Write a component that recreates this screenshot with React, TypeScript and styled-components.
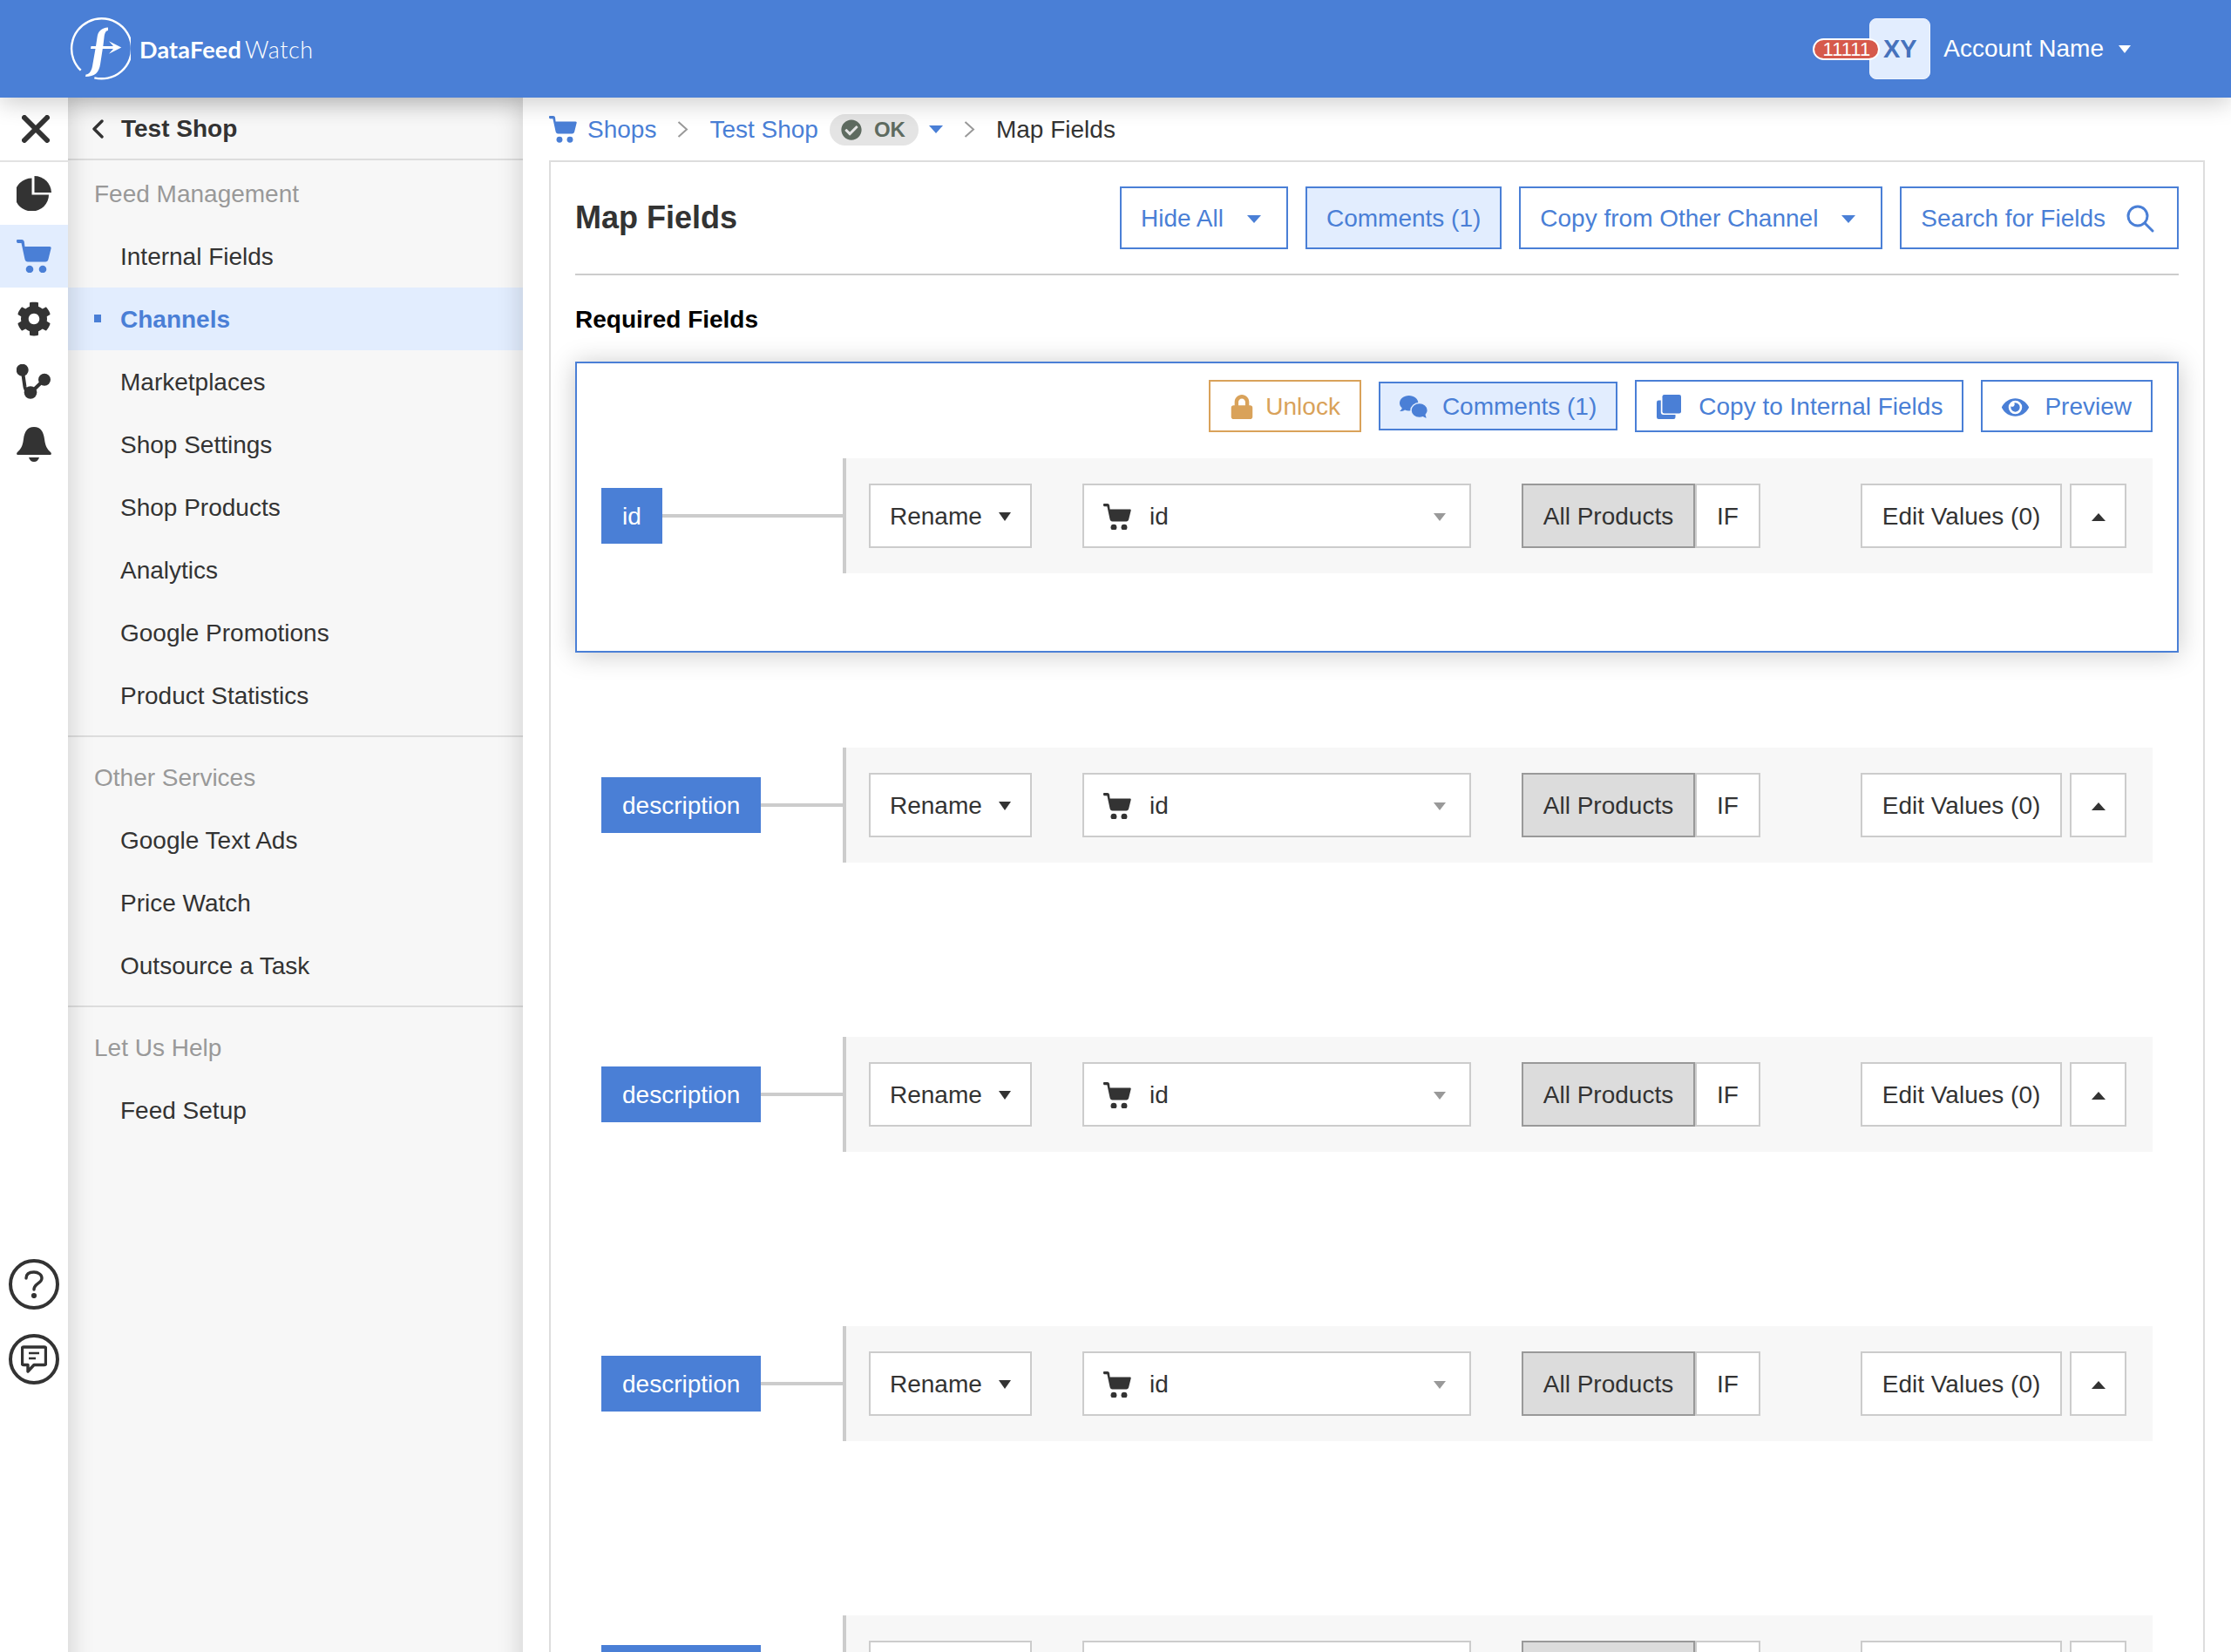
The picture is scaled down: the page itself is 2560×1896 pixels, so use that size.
import { createGlobalStyle } from "styled-components";
import styled from "styled-components";
import { FaCheckCircle, FaCog, FaEye, FaLock } from "react-icons/fa";

const Global = createGlobalStyle`
  html, body { margin: 0; padding: 0; height: 100%; overflow: hidden; background: #fff; }
  * { box-sizing: border-box; }
  body { font-family: "Liberation Sans", Arial, sans-serif; font-size: 28px; color: #333; }
`;

const BLUE = "#4a7fd6";
const TINT = "#e2edfe";

const Shell = styled.div`
  display: flex;
  flex-direction: column;
  height: 1896px;
  overflow: hidden;
`;

const Header = styled.header`
  position: relative;
  z-index: 3;
  flex: 0 0 112px;
  display: flex;
  align-items: center;
  padding: 0 115px 0 80px;
  background: ${BLUE};
  color: #fff;
  box-shadow: 0 6px 26px rgba(0, 0, 0, 0.2);
`;

const Brand = styled.div`
  display: flex;
  align-items: center;
  gap: 10px;
`;

const Wordmark = styled.span`
  font-family: Lato, sans-serif;
  font-size: 27px;
  font-weight: 700;
  letter-spacing: 0.2px;
  span { font-weight: 300; margin-left: 4px; letter-spacing: 0.6px; }
`;

const Account = styled.div`
  margin-left: auto;
  display: flex;
  align-items: center;
`;

const Avatar = styled.div`
  position: relative;
  width: 70px;
  height: 70px;
  display: flex;
  align-items: center;
  justify-content: center;
  background: ${TINT};
  border: 1px solid #f0f5ff;
  border-radius: 8px;
  color: #4672bc;
  font-size: 29px;
  font-weight: 700;
  margin-right: 15px;
`;

const Badge = styled.span`
  position: absolute;
  right: 57px;
  top: 22px;
  width: 77px;
  height: 25px;
  display: flex;
  align-items: center;
  justify-content: center;
  background: #d6594b;
  border: 2px solid #fff;
  border-radius: 13px;
  color: #fff;
  font-size: 22px;
  font-weight: 400;
`;

const Caret = styled.span<{ $color?: string; $w?: number; $h?: number; $up?: boolean; $trail?: number }>`
  display: inline-block;
  flex: none;
  width: 0;
  height: 0;
  margin-right: ${(p) => p.$trail ?? 0}px;
  border-left: ${(p) => (p.$w ?? 14) / 2}px solid transparent;
  border-right: ${(p) => (p.$w ?? 14) / 2}px solid transparent;
  ${(p) => (p.$up ? "border-bottom" : "border-top")}: ${(p) => p.$h ?? 9}px solid ${(p) => p.$color ?? "currentColor"};
`;

const AccountCaret = styled(Caret)`
  margin-left: 17px;
`;

const Body = styled.div`
  flex: 1;
  display: flex;
  min-height: 0;
`;

const Rail = styled.nav`
  flex: 0 0 78px;
  display: flex;
  flex-direction: column;
  background: #fff;
  padding-bottom: 307px;
`;

const RailClose = styled.div`
  height: 74px;
  display: flex;
  align-items: center;
  justify-content: center;
  padding-left: 3px;
  border-bottom: 2px solid #e2e2e2;
`;

const RailItem = styled.div<{ $active?: boolean }>`
  height: 72px;
  display: flex;
  align-items: center;
  justify-content: center;
  color: ${(p) => (p.$active ? BLUE : "#333")};
  background: ${(p) => (p.$active ? TINT : "transparent")};
`;

const RailFoot = styled.div`
  margin-top: auto;
  display: flex;
  flex-direction: column;
  align-items: center;
  gap: 28px;
`;

const RoundIcon = styled.div`
  width: 58px;
  height: 58px;
  display: flex;
  align-items: center;
  justify-content: center;
  border: 4px solid #333;
  border-radius: 50%;
`;

const Sidebar = styled.aside`
  position: relative;
  flex: 0 0 522px;
  background: #f7f7f7;
  &::after {
    content: "";
    position: absolute;
    inset: 0 0 -60px 0;
    pointer-events: none;
    box-shadow: inset 0 0 30px rgba(0, 0, 0, 0.18);
  }
`;

const SideHead = styled.div`
  height: 72px;
  display: flex;
  align-items: center;
  padding: 2px 0 0 28px;
  gap: 20px;
  font-weight: 700;
  border-bottom: 2px solid #ddd;
`;

const SideGroup = styled.div<{ $first?: boolean; $last?: boolean }>`
  padding: ${(p) => (p.$first ? 2 : 10)}px 0 10px;
  border-bottom: ${(p) => (p.$last ? "none" : "2px solid #ddd")};
`;

const SideLabel = styled.div`
  height: 72px;
  line-height: 73px;
  padding-left: 30px;
  color: #999;
`;

const SideItem = styled.div<{ $active?: boolean }>`
  position: relative;
  height: 72px;
  line-height: 74px;
  padding-left: 60px;
  font-weight: ${(p) => (p.$active ? 700 : 400)};
  color: ${(p) => (p.$active ? BLUE : "#333")};
  background: ${(p) => (p.$active ? TINT : "transparent")};
  &::before {
    content: "";
    display: ${(p) => (p.$active ? "block" : "none")};
    position: absolute;
    left: 30px;
    top: 31px;
    width: 8px;
    height: 9px;
    background: ${BLUE};
  }
`;

const Main = styled.main`
  flex: 1;
  display: flex;
  flex-direction: column;
  min-width: 0;
  padding: 0 30px;
`;

const Crumbs = styled.div`
  flex: 0 0 72px;
  display: flex;
  align-items: center;
  padding-top: 1px;
`;

const CrumbHome = styled.span`
  display: flex;
  align-items: center;
  gap: 12px;
`;

const Crumb = styled.span<{ $link?: boolean }>`
  color: ${(p) => (p.$link ? BLUE : "#333")};
`;

const CrumbArrow = styled.svg`
  flex: none;
  margin: 0 24px;
`;

const StatusPill = styled.span`
  display: flex;
  align-items: center;
  gap: 14px;
  height: 36px;
  margin: 0 12px 0 13px;
  padding: 0 15px 0 13px;
  border-radius: 18px;
  background: #e4e4e4;
  color: #5e6b60;
  font-size: 24px;
  font-weight: 700;
`;

const Panel = styled.section`
  flex: 1;
  min-height: 0;
  padding: 0 28px;
  border: 2px solid #ddd;
  border-bottom: none;
`;

const TopBar = styled.div`
  display: flex;
  align-items: center;
  justify-content: space-between;
  padding: 28px 0;
  border-bottom: 2px solid #ccc;
`;

const Title = styled.h1`
  margin: 0;
  font-size: 36px;
  line-height: 72px;
  font-weight: 700;
  color: #333;
`;

const TopActions = styled.div`
  display: flex;
  gap: 20px;
`;

const OutlineButton = styled.button<{ $active?: boolean; $gap?: number }>`
  display: flex;
  align-items: center;
  gap: ${(p) => p.$gap ?? 27}px;
  height: 72px;
  padding: 2px 22px 0;
  font: inherit;
  white-space: nowrap;
  color: ${BLUE};
  background: ${(p) => (p.$active ? TINT : "#fff")};
  border: 2px solid ${BLUE};
`;

const Subtitle = styled.h2`
  margin: 34px 0 31px;
  font-size: 28px;
  line-height: 34px;
  font-weight: 700;
  color: #000;
`;

const FieldCard = styled.div<{ $selected?: boolean }>`
  position: relative;
  z-index: ${(p) => (p.$selected ? 1 : 0)};
  height: ${(p) => (p.$selected ? 334 : 332)}px;
  margin-bottom: ${(p) => (p.$selected ? -2 : 0)}px;
  padding: 19px 28px 0 28px;
  border: 2px solid ${(p) => (p.$selected ? BLUE : "transparent")};
  background: #fff;
  box-shadow: ${(p) => (p.$selected ? "0 2px 28px rgba(0, 0, 0, 0.22)" : "none")};
`;

const CardActions = styled.div`
  height: 60px;
  margin-bottom: 30px;
  display: flex;
  align-items: center;
  justify-content: flex-end;
  gap: 20px;
`;

const CardButton = styled(OutlineButton)<{ $tone?: string }>`
  height: ${(p) => (p.$active ? 56 : 60)}px;
  color: ${(p) => p.$tone ?? BLUE};
  border-color: ${(p) => p.$tone ?? BLUE};
`;

const FieldRow = styled.div`
  display: flex;
  align-items: center;
`;

const FieldTag = styled.span`
  flex: none;
  height: 64px;
  line-height: 66px;
  padding: 0 24px;
  background: ${BLUE};
  color: #fff;
`;

const Connector = styled.span`
  flex: 1;
  height: 4px;
  background: #ccc;
`;

const Mapping = styled.div`
  flex: 0 0 1503px;
  height: 132px;
  display: flex;
  align-items: center;
  padding: 0 30px 0 26px;
  background: #f7f7f7;
  border-left: 4px solid #ccc;
`;

const Control = styled.button<{ $w?: number; $on?: boolean; $center?: boolean }>`
  flex: none;
  display: flex;
  align-items: center;
  justify-content: ${(p) => (p.$center ? "center" : "space-between")};
  width: ${(p) => (p.$w ? `${p.$w}px` : "auto")};
  height: 74px;
  padding: 2px 22px 0;
  font: inherit;
  white-space: nowrap;
  color: #333;
  background: ${(p) => (p.$on ? "#dcdcdc" : "#fff")};
  border: 2px solid ${(p) => (p.$on ? "#999" : "#ccc")};
`;

const Source = styled.span`
  display: flex;
  align-items: center;
  gap: 21px;
`;

const Spaced = styled.div<{ $left: number }>`
  margin-left: ${(p) => p.$left}px;
  display: flex;
`;

const RightGroup = styled.div`
  margin-left: auto;
  display: flex;
  gap: 9px;
`;

const SearchGlyph = styled.svg`
  flex: none;
  margin-right: 4px;
`;

const CartIcon = ({ size = 40, color = "currentColor" }: { size?: number; color?: string }) => (
  <svg width={size} height={size * 0.96} viewBox="0 0 40 38.4" fill={color}>
    <path d="M0 1.5 C0 .5 .5 0 1.5 0 H6 C7.5 0 8.5 1 8.8 2.5 L9.5 8 H38 C39.3 8 40 9 39.6 10 L36.5 22.5 C36 24.4 35 25.5 33 25.5 H13 C11 25.5 10 24.4 9.5 22.5 L5.5 4 H1.5 C.5 4 0 3 0 1.5 Z" />
    <circle cx="15" cy="34" r="4.3" />
    <circle cx="30" cy="34" r="4.3" />
  </svg>
);

const Chevron = () => (
  <CrumbArrow width="13" height="19" viewBox="0 0 13 19" fill="none" stroke="#999" strokeWidth="2">
    <path d="M1.5 1 L11 9.5 L1.5 18" />
  </CrumbArrow>
);

const Logo = () => (
  <svg width="70" height="72" viewBox="0 0 70 72" fill="#fff">
    <path d="M12.7 60.7 A34.5 34.5 0 1 1 28.3 69.3" fill="none" stroke="#fff" strokeWidth="2.4" />
    <path d="M44 11.5 L44 15 C41 15 40 19 39.5 23 L38.3 33 H50 L45 27.3 L59.3 34.5 L45 41.7 L50 36 H37.8 L35 54 C33.5 63 29 68 18 68 L18.5 65.5 C23 65 25.5 61 26.5 53 L29.5 36 H24 L24.5 33 H30 L31.5 23 C32.5 15.5 36.5 12 44 11.5 Z" />
  </svg>
);

const PieIcon = () => (
  <svg width="40" height="40" viewBox="0 0 40 40" fill="#333">
    <path d="M20.5 0 A19.5 19.5 0 0 1 40 19 H20.5 Z" />
    <path d="M17.5 2.5 V21.5 H37 A19.5 19 0 1 1 17.5 2.5 Z" />
  </svg>
);

const BranchIcon = () => (
  <svg width="40" height="40" viewBox="0 0 40 40">
    <path d="M6.7 6.7 L9.5 26 Q11 34 18 31 L31.7 17.7" fill="none" stroke="#333" strokeWidth="4" />
    <circle cx="6.7" cy="6.7" r="7" fill="#333" />
    <circle cx="32" cy="17.7" r="7" fill="#333" />
    <circle cx="16" cy="32.5" r="7.3" fill="#333" />
  </svg>
);

const BellIcon = () => (
  <svg width="40" height="40" viewBox="0 0 40 40" fill="#333">
    <path d="M20 0 C28 0 31 6 32 14 C33 22 35 25 39 29 C40.5 30.5 40 32 38 32 H2 C0 32 -.5 30.5 1 29 C5 25 7 22 8 14 C9 6 12 0 20 0 Z" />
    <path d="M14 35 H26 C25 38 23 40 20 40 C17 40 15 38 14 35 Z" />
  </svg>
);

const BubblesIcon = () => (
  <svg width="33" height="27" viewBox="0 0 33 27" fill={BLUE}>
    <path d="M10.7 0 C16.6 0 21.4 3.9 21.4 8.7 C21.4 13.5 16.6 17.4 10.7 17.4 C9 17.4 7.5 17.1 6 16.5 C4.5 17.5 2.5 18 0 18 C1.5 16.8 2.4 15.6 2.8 14.2 C1 12.6 0 10.8 0 8.7 C0 3.9 4.8 0 10.7 0 Z" />
    <path d="M22.7 8.5 C28 8.5 32.4 12.3 32.4 17 C32.4 18.9 31.6 20.7 30.3 22.1 C30.6 23.8 31.4 25.4 32.6 26.6 C30.3 26.6 28.4 26 26.8 24.8 C25.5 25.3 24.1 25.5 22.7 25.5 C17.4 25.5 13 21.7 13 17 C13 12.3 17.4 8.5 22.7 8.5 Z" stroke={TINT} strokeWidth="1.5" />
  </svg>
);

const StackIcon = () => (
  <svg width="30" height="28" viewBox="0 0 30 28" fill={BLUE}>
    <rect x="1" y="6.5" width="21.5" height="21.5" rx="2.2" />
    <rect x="5.8" y="-1" width="24" height="24" rx="3" fill="#fff" />
    <rect x="7.5" y="0" width="21.5" height="21.5" rx="2.2" />
  </svg>
);

const FieldLine = ({ name, selected }: { name: string; selected?: boolean }) => (
  <FieldCard $selected={selected}>
    <CardActions>
      {selected && (
        <>
          <CardButton $tone="#d9a25a" $gap={13}>
            <FaLock size={28} />
            Unlock
          </CardButton>
          <CardButton $active $gap={16}>
            <BubblesIcon />
            Comments (1)
          </CardButton>
          <CardButton $gap={19}>
            <StackIcon />
            Copy to Internal Fields
          </CardButton>
          <CardButton $gap={18}>
            <FaEye size={31} />
            Preview
          </CardButton>
        </>
      )}
    </CardActions>
    <FieldRow>
      <FieldTag>{name}</FieldTag>
      <Connector />
      <Mapping>
        <Control $w={187}>
          Rename
          <Caret $w={14} $h={10} />
        </Control>
        <Spaced $left={58}>
          <Control $w={446}>
            <Source>
              <CartIcon size={32} color="#333" />
              id
            </Source>
            <Caret $w={14} $h={9} $color="#999" $trail={5} />
          </Control>
        </Spaced>
        <Spaced $left={58}>
          <Control $w={199} $on $center>All Products</Control>
          <Control $w={75} $center>IF</Control>
        </Spaced>
        <RightGroup>
          <Control $w={231} $center>Edit Values (0)</Control>
          <Control $w={65} $center>
            <Caret $w={16} $h={9} $up />
          </Control>
        </RightGroup>
      </Mapping>
    </FieldRow>
  </FieldCard>
);

export default function App() {
  return (
    <Shell>
      <Global />
      <Header>
        <Brand>
          <Logo />
          <Wordmark>
            DataFeed<span>Watch</span>
          </Wordmark>
        </Brand>
        <Account>
          <Avatar>
            <Badge>11111</Badge>
            XY
          </Avatar>
          Account Name
          <AccountCaret />
        </Account>
      </Header>
      <Body>
        <Rail>
          <RailClose>
            <svg width="32" height="32" viewBox="0 0 32 32" fill="none" stroke="#333" strokeWidth="6" strokeLinecap="round">
              <path d="M3 3 L29 29 M29 3 L3 29" />
            </svg>
          </RailClose>
          <RailItem><PieIcon /></RailItem>
          <RailItem $active><CartIcon /></RailItem>
          <RailItem><FaCog size={40} /></RailItem>
          <RailItem><BranchIcon /></RailItem>
          <RailItem><BellIcon /></RailItem>
          <RailFoot>
            <RoundIcon>
              <svg width="22" height="32" viewBox="0 0 22 32" fill="none" stroke="#333" strokeWidth="3.4" strokeLinecap="round">
                <path d="M2 9 C2 4 6 2 11 2 C16 2 20 5 20 9 C20 15 11 15 11 22" />
                <circle cx="11" cy="29" r="1.4" fill="#333" />
              </svg>
            </RoundIcon>
            <RoundIcon>
              <svg width="30" height="32" viewBox="0 0 30 32" fill="none" stroke="#333" strokeWidth="3.4" strokeLinejoin="round">
                <path d="M3 2 H27 C28 2 28.5 2.5 28.5 3.5 V21 C28.5 22 28 22.5 27 22.5 H15 L8 30 V22.5 H3 C2 22.5 1.5 22 1.5 21 V3.5 C1.5 2.5 2 2 3 2 Z" />
                <path d="M9 9 H21 M9 15 H17" strokeWidth="2.6" />
              </svg>
            </RoundIcon>
          </RailFoot>
        </Rail>
        <Sidebar>
          <SideHead>
            <svg width="13" height="22" viewBox="0 0 13 22" fill="none" stroke="#333" strokeWidth="3.4" strokeLinecap="round" strokeLinejoin="round">
              <path d="M11 2 L2 11 L11 20" />
            </svg>
            Test Shop
          </SideHead>
          <SideGroup $first>
            <SideLabel>Feed Management</SideLabel>
            <SideItem>Internal Fields</SideItem>
            <SideItem $active>Channels</SideItem>
            <SideItem>Marketplaces</SideItem>
            <SideItem>Shop Settings</SideItem>
            <SideItem>Shop Products</SideItem>
            <SideItem>Analytics</SideItem>
            <SideItem>Google Promotions</SideItem>
            <SideItem>Product Statistics</SideItem>
          </SideGroup>
          <SideGroup>
            <SideLabel>Other Services</SideLabel>
            <SideItem>Google Text Ads</SideItem>
            <SideItem>Price Watch</SideItem>
            <SideItem>Outsource a Task</SideItem>
          </SideGroup>
          <SideGroup $last>
            <SideLabel>Let Us Help</SideLabel>
            <SideItem>Feed Setup</SideItem>
          </SideGroup>
        </Sidebar>
        <Main>
          <Crumbs>
            <CrumbHome>
              <CartIcon size={32} color={BLUE} />
              <Crumb $link>Shops</Crumb>
            </CrumbHome>
            <Chevron />
            <Crumb $link>Test Shop</Crumb>
            <StatusPill>
              <FaCheckCircle size={24} />
              OK
            </StatusPill>
            <Caret $w={17} $h={9} $color={BLUE} />
            <Chevron />
            <Crumb>Map Fields</Crumb>
          </Crumbs>
          <Panel>
            <TopBar>
              <Title>Map Fields</Title>
              <TopActions>
                <OutlineButton>
                  Hide All
                  <Caret $w={16} $h={9} $trail={7} />
                </OutlineButton>
                <OutlineButton $active>Comments (1)</OutlineButton>
                <OutlineButton>
                  Copy from Other Channel
                  <Caret $w={16} $h={9} $trail={7} />
                </OutlineButton>
                <OutlineButton $gap={24}>
                  Search for Fields
                  <SearchGlyph width="32" height="32" viewBox="0 0 32 32" fill="none" stroke={BLUE} strokeWidth="3" strokeLinecap="round">
                    <circle cx="13" cy="13" r="11" />
                    <path d="M21 21 L30 30" />
                  </SearchGlyph>
                </OutlineButton>
              </TopActions>
            </TopBar>
            <Subtitle>Required Fields</Subtitle>
            <FieldLine name="id" selected />
            <FieldLine name="description" />
            <FieldLine name="description" />
            <FieldLine name="description" />
            <FieldLine name="description" />
          </Panel>
        </Main>
      </Body>
    </Shell>
  );
}
